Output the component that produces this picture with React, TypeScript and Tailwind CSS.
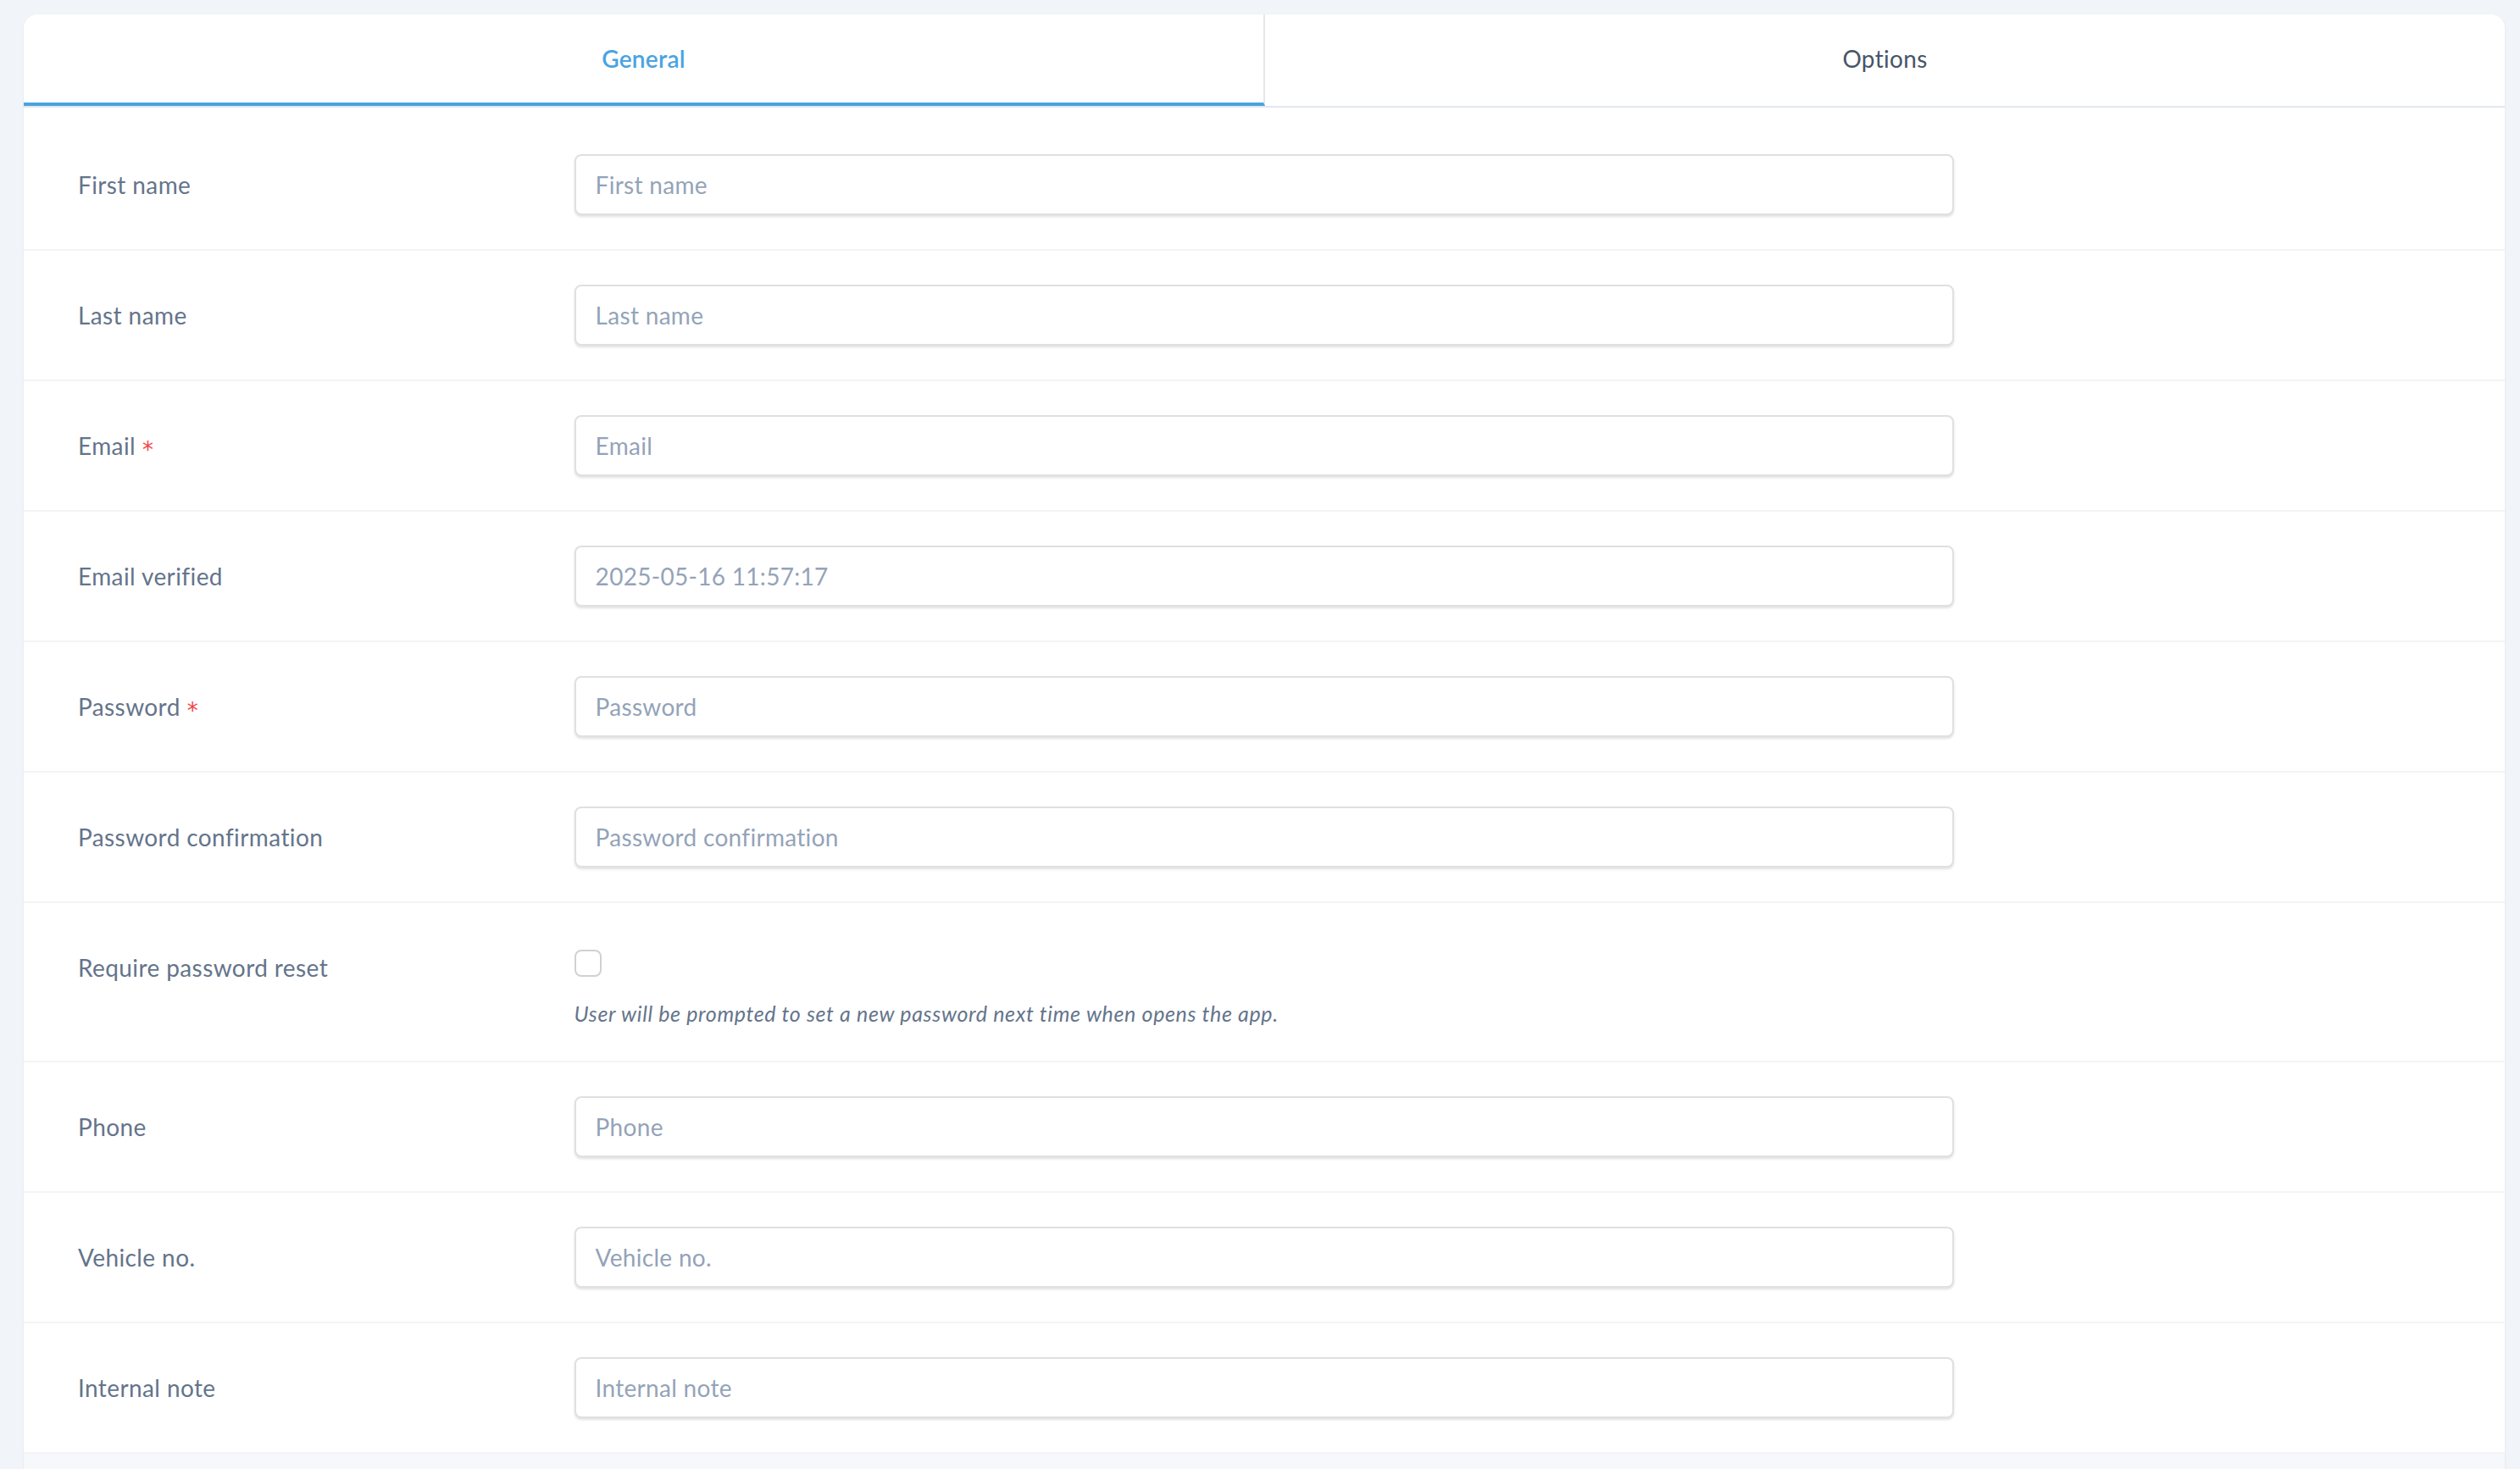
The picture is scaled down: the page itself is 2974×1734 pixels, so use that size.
import React, { useState } from 'react';

type Field = {
  label: string;
  placeholder: string;
  required?: boolean;
};

const before: Field[] = [
  { label: 'First name', placeholder: 'First name' },
  { label: 'Last name', placeholder: 'Last name' },
  { label: 'Email', placeholder: 'Email', required: true },
  { label: 'Email verified', placeholder: '2025-05-16 11:57:17' },
  { label: 'Password', placeholder: 'Password', required: true },
  { label: 'Password confirmation', placeholder: 'Password confirmation' },
];

const after: Field[] = [
  { label: 'Phone', placeholder: 'Phone' },
  { label: 'Vehicle no.', placeholder: 'Vehicle no.' },
  { label: 'Internal note', placeholder: 'Internal note' },
];

function Label({ text, required }: { text: string; required?: boolean }) {
  return (
    <div className="w-1/5 px-[64px] pt-[16px] text-[28px] leading-[40px] tracking-[0.4px] text-[#64748b]">
      {text}
      {required && (
        <span className="ml-[8px] inline-block translate-y-[3px] font-['DejaVu_Sans',sans-serif] text-[26px] text-[#ef4444]">
          *
        </span>
      )}
    </div>
  );
}

function TextRow({ field }: { field: Field }) {
  return (
    <div className="flex items-start border-b-2 border-[#f3f4f6] py-[40px]">
      <Label text={field.label} required={field.required} />
      <div className="w-3/5 px-[64px]">
        <input
          type="text"
          placeholder={field.placeholder}
          className="block h-[72px] w-full rounded-[8px] border-2 border-[#e0e0e0] bg-white px-[23px] text-[28px] tracking-[0.3px] text-[#334155] shadow-[0_2px_3px_rgba(0,0,0,0.12)] outline-none placeholder:text-[#94a3b8]"
        />
      </div>
    </div>
  );
}

export default function App() {
  const [tab, setTab] = useState('general');
  const [reset, setReset] = useState(false);

  const tabClass = (active: boolean) =>
    active
      ? 'border-b-[#4ba3e0] font-semibold text-[#4ba3e0]'
      : 'border-b-transparent text-[#475569]';

  return (
    <div className="min-h-screen bg-[#f1f5f9] pt-[17px] pl-[28px] pr-[18px] font-['Lato',sans-serif]">
      <div className="min-h-[1717px] overflow-hidden rounded-t-[16px] bg-white shadow-[0_1px_3px_rgba(15,23,42,0.08)]">
        {/* Tabs */}
        <div className="flex border-b-2 border-[#e2e8f0]">
          <button
            onClick={() => setTab('general')}
            className={`flex h-[108px] flex-1 items-center justify-center border-r-2 border-b-4 border-r-[#e2e8f0] text-[28px] tracking-[0.3px] ${tabClass(
              tab === 'general'
            )}`}
          >
            General
          </button>
          <button
            onClick={() => setTab('options')}
            className={`flex h-[108px] flex-1 items-center justify-center border-b-4 text-[28px] tracking-[0.3px] ${tabClass(
              tab === 'options'
            )}`}
          >
            Options
          </button>
        </div>

        {/* Fields */}
        <div className="pt-[15px]">
          {before.map((f) => (
            <TextRow key={f.label} field={f} />
          ))}

          <div className="flex items-start border-b-2 border-[#f3f4f6] py-[40px]">
            <Label text="Require password reset" />
            <div className="w-3/5 px-[64px]">
              <button
                onClick={() => setReset(!reset)}
                className={`mt-[15px] block h-[32px] w-[32px] rounded-[8px] border-2 ${
                  reset ? 'border-[#4ba3e0] bg-[#4ba3e0]' : 'border-[#d1d1d1] bg-white'
                }`}
              />
              <p className="mt-[27px] text-[25px] leading-[32px] tracking-[0.65px] italic text-[#64748b]">
                User will be prompted to set a new password next time when opens the app.
              </p>
            </div>
          </div>

          {after.map((f) => (
            <TextRow key={f.label} field={f} />
          ))}
        </div>

        <div className="h-[40px] bg-[#f6f8fb]" />
      </div>
    </div>
  );
}
